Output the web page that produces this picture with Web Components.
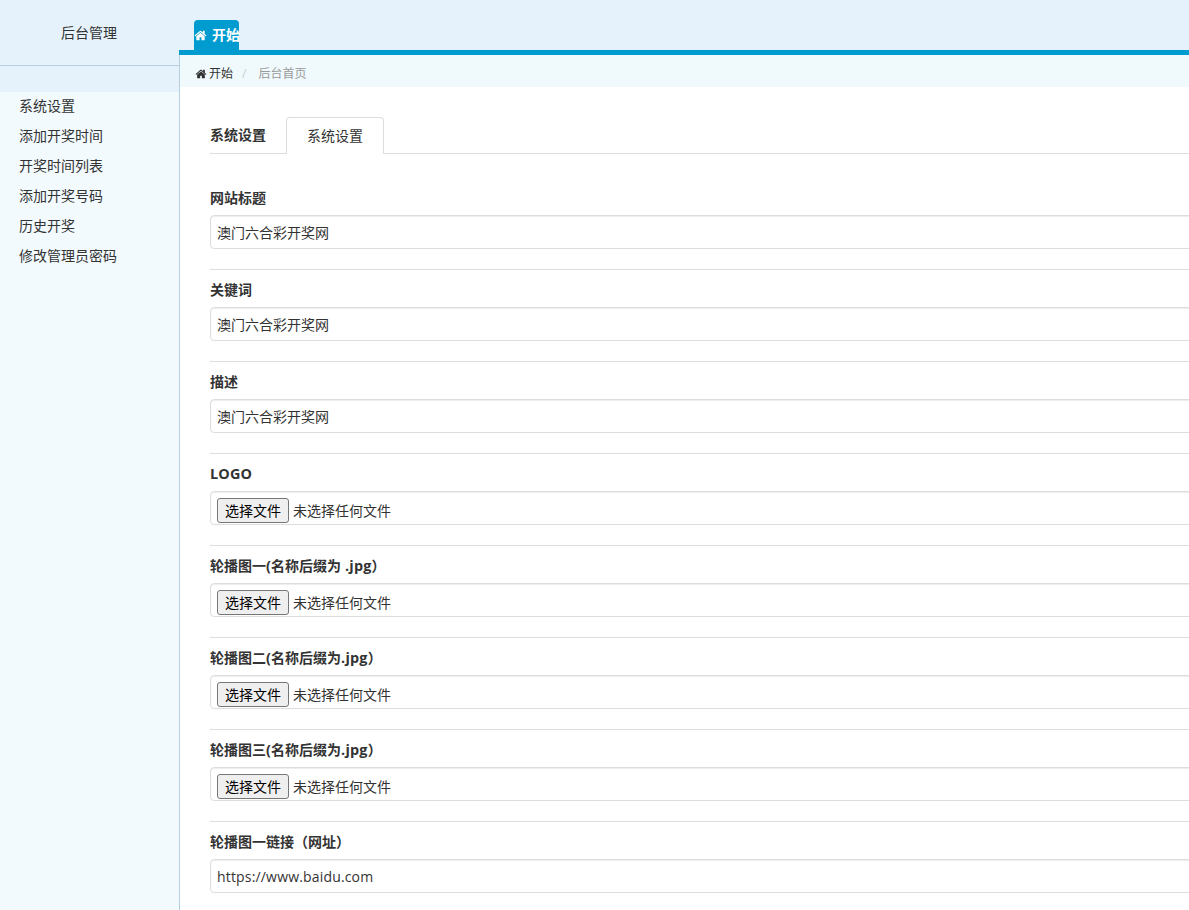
<!DOCTYPE html>
<html lang="zh">
<head>
<meta charset="utf-8">
<title>后台管理</title>
<style>
    html, body { margin: 0; height: 100%; overflow: hidden; }
    body {
        font: 14px/20px "Open Sans", "Noto Sans CJK SC", sans-serif;
        color: #333;
        background: #fff;
    }
    admin-shell { height: 100%; }
</style>
</head>
<body>
<admin-shell>
    <side-nav slot="side" title-text="后台管理">
        <nav-item>系统设置</nav-item>
        <nav-item>添加开奖时间</nav-item>
        <nav-item>开奖时间列表</nav-item>
        <nav-item>添加开奖号码</nav-item>
        <nav-item>历史开奖</nav-item>
        <nav-item>修改管理员密码</nav-item>
    </side-nav>
    <top-tabs slot="top"></top-tabs>
    <bread-crumb slot="top"></bread-crumb>
    <tab-head>
        <span slot="title">系统设置</span>
        系统设置
    </tab-head>
    <form-row label="网站标题"><text-field value="澳门六合彩开奖网"></text-field></form-row>
    <form-row label="关键词"><text-field value="澳门六合彩开奖网"></text-field></form-row>
    <form-row label="描述"><text-field value="澳门六合彩开奖网"></text-field></form-row>
    <form-row label="LOGO"><file-field></file-field></form-row>
    <form-row label="轮播图一(名称后缀为 .jpg）"><file-field></file-field></form-row>
    <form-row label="轮播图二(名称后缀为.jpg）"><file-field></file-field></form-row>
    <form-row label="轮播图三(名称后缀为.jpg）"><file-field></file-field></form-row>
    <form-row label="轮播图一链接（网址）"><text-field value="https://www.baidu.com" style="--track: .17px"></text-field></form-row>
</admin-shell>

<script>
const homeIcon = `<svg viewBox="0 0 1792 1792" width="13" height="13" fill="currentColor" aria-hidden="true"><path d="M1472 992v480q0 26-19 45t-45 19h-384v-384h-256v384h-384q-26 0-45-19t-19-45v-480q0-1 .5-3t.5-3l575-474 575 474q1 2 1 6zm223-69l-62 74q-8 9-21 11h-3q-13 0-21-7l-692-577-692 577q-12 8-24 7-13-2-21-11l-62-74q-8-10-7-23.500t11-21.500l719-599q32-26 76-26t76 26l244 204v-195q0-14 9-23t23-9h192q14 0 23 9t9 23v408l219 182q10 8 11 21.500t-7 23.500z"/></svg>`;

class AdminShell extends HTMLElement {
    constructor() {
        super();
        this.attachShadow({ mode: 'open' });
        this.shadowRoot.innerHTML = `
            <style>
                :host { display: grid; grid-template-columns: 180px minmax(0, 1fr); overflow: hidden; }
                /* the blue bar runs over the sidebar border, so main starts 1px early */
                .main { min-width: 0; overflow: hidden; margin-left: -1px; }
                .page { padding: 30px 0 0 31px; margin-right: -40px; }
            </style>
            <slot name="side"></slot>
            <div class="main">
                <slot name="top"></slot>
                <div class="page"><slot></slot></div>
            </div>
        `;
    }
}

class SideNav extends HTMLElement {
    constructor() {
        super();
        this.attachShadow({ mode: 'open' });
        this.shadowRoot.innerHTML = `
            <style>
                :host {
                    display: block;
                    background: #f2fafe;
                    border-right: 1px solid #b8cfdf;
                }
                .brand {
                    height: 65px;
                    padding-right: 1px;
                    background: #e5f2fb;
                    border-bottom: 1px solid #b8cfdf;
                    text-align: center;
                    line-height: 66px;
                    color: #333;
                }
                .band { height: 26px; background: #e5f2fb; }
                .list { display: flex; flex-direction: column; }
            </style>
            <div class="brand"></div>
            <div class="band"></div>
            <div class="list"><slot></slot></div>
        `;
        this.shadowRoot.querySelector('.brand').textContent = this.getAttribute('title-text');
    }
}

class NavItem extends HTMLElement {
    constructor() {
        super();
        this.attachShadow({ mode: 'open' });
        this.shadowRoot.innerHTML = `
            <style>
                :host { display: block; height: 30px; line-height: 28px; padding-left: 19px; color: #333; }
            </style>
            <slot></slot>
        `;
    }
}

class TopTabs extends HTMLElement {
    constructor() {
        super();
        this.attachShadow({ mode: 'open' });
        this.shadowRoot.innerHTML = `
            <style>
                :host {
                    display: flex;
                    align-items: flex-end;
                    height: 50px;
                    padding-left: 15px;
                    background: #e5f2fb;
                    border-bottom: 5px solid #009bcf;
                }
                .tab {
                    display: flex;
                    align-items: center;
                    gap: 5px;
                    width: 45px;
                    height: 30px;
                    overflow: hidden;
                    white-space: nowrap;
                    background: #009bcf;
                    border-radius: 4px 4px 0 0;
                    color: #fff;
                    font-weight: bold;
                }
                svg { flex: none; }
                span { flex: none; }
            </style>
            <div class="tab">${homeIcon}<span>开始</span></div>
        `;
    }
}

class BreadCrumb extends HTMLElement {
    constructor() {
        super();
        this.attachShadow({ mode: 'open' });
        this.shadowRoot.innerHTML = `
            <style>
                :host {
                    display: flex;
                    align-items: center;
                    height: 26px;
                    margin-left: 1px;
                    padding: 6px 0 0 15px;
                    background: #f0fafd;
                    font-size: 12px;
                    color: #333;
                }
                svg { width: 12px; height: 12px; margin-right: 2px; }
                .sep { color: #ccc; margin: 0 12px 0 9px; }
                .now { color: #999; }
            </style>
            ${homeIcon}<span>开始</span><span class="sep">/</span><span class="now">后台首页</span>
        `;
    }
}

class TabHead extends HTMLElement {
    constructor() {
        super();
        this.attachShadow({ mode: 'open' });
        this.shadowRoot.innerHTML = `
            <style>
                :host {
                    display: flex;
                    align-items: stretch;
                    height: 36px;
                    border-bottom: 1px solid #ddd;
                    margin-bottom: 34px;
                }
                .title { width: 76px; font-weight: bold; line-height: 36px; }
                .active {
                    width: 96px;
                    height: 36px;
                    text-align: center;
                    line-height: 36px;
                    background: #fff;
                    border: 1px solid #ddd;
                    border-bottom: 0;
                    border-radius: 4px 4px 0 0;
                }
            </style>
            <div class="title"><slot name="title"></slot></div>
            <div class="active"><slot></slot></div>
        `;
    }
}

class FormRow extends HTMLElement {
    constructor() {
        super();
        this.attachShadow({ mode: 'open' });
        this.shadowRoot.innerHTML = `
            <style>
                :host { display: block; height: 92px; }
                label { display: block; height: 20px; margin-bottom: 7px; font-weight: bold; color: #333; }
                .latin { font-size: 14.4px; letter-spacing: .2px; }
                hr { border: 0; border-top: 1px solid #ddd; margin: 20px 0 0; }
            </style>
            <label></label>
            <div class="wrap"><slot></slot></div>
            <hr>
        `;
        // latin runs come out a little wider in the reference than in the CJK face
        this.shadowRoot.querySelector('label').innerHTML = this.getAttribute('label')
            .replace(/[(. a-zA-Z]+/g, m => `<span class="latin">${m}</span>`);
    }
}

class TextField extends HTMLElement {
    constructor() {
        super();
        this.attachShadow({ mode: 'open' });
        this.shadowRoot.innerHTML = `
            <style>
                :host { display: block; }
                input {
                    display: block;
                    box-sizing: border-box;
                    width: 100%;
                    height: 34px;
                    padding: 0 6px;
                    border: 1px solid #ddd;
                    border-radius: 4px;
                    box-shadow: inset 0 1px 1px rgba(0, 0, 0, .075);
                    font: inherit;
                    letter-spacing: var(--track, 0);
                    color: #333;
                    outline: none;
                }
            </style>
            <input type="text">
        `;
        this.shadowRoot.querySelector('input').setAttribute('value', this.getAttribute('value'));
    }
}

class FileField extends HTMLElement {
    constructor() {
        super();
        this.attachShadow({ mode: 'open' });
        this.shadowRoot.innerHTML = `
            <style>
                :host {
                    display: flex;
                    align-items: center;
                    box-sizing: border-box;
                    height: 34px;
                    padding: 5px 6px 0;
                    border: 1px solid #ddd;
                    border-radius: 4px;
                    box-shadow: inset 0 1px 1px rgba(0, 0, 0, .075);
                    color: #333;
                }
                button {
                    width: 72px;
                    height: 25px;
                    padding: 0;
                    margin-right: 4px;
                    background: #efefef;
                    border: 1px solid #767676;
                    border-radius: 3px;
                    font: inherit;
                    color: #000;
                }
            </style>
            <button type="button">选择文件</button><span>未选择任何文件</span>
        `;
    }
}

customElements.define('admin-shell', AdminShell);
customElements.define('side-nav', SideNav);
customElements.define('nav-item', NavItem);
customElements.define('top-tabs', TopTabs);
customElements.define('bread-crumb', BreadCrumb);
customElements.define('tab-head', TabHead);
customElements.define('form-row', FormRow);
customElements.define('text-field', TextField);
customElements.define('file-field', FileField);
</script>
</body>
</html>
